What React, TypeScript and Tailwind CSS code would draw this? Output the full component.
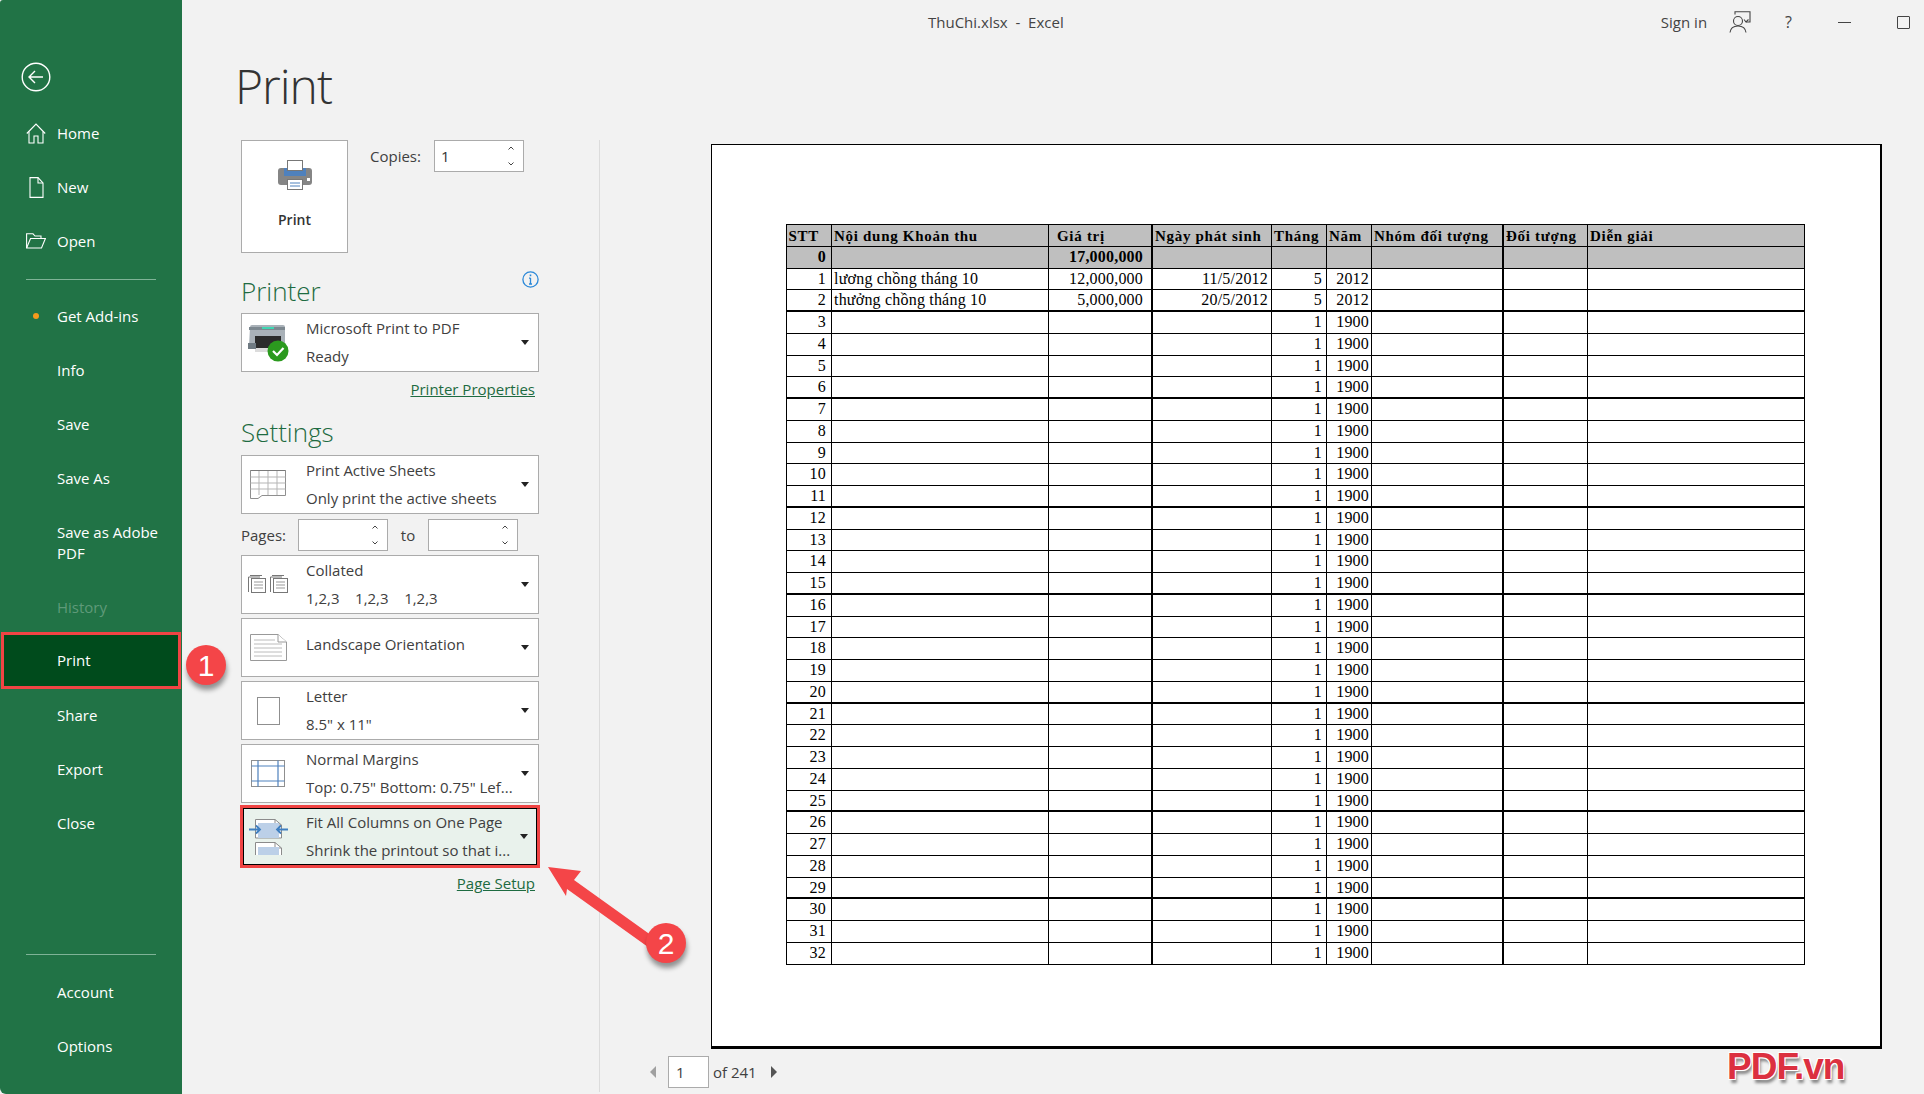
import type { ReactNode } from "react";

const uiFont = "font-['Open_Sans','Noto_Sans',sans-serif]";

const navTop = ["Home", "New", "Open"];
const navMid = ["Info", "Save", "Save As"];
const navLow = ["Share", "Export", "Close"];

const colWidths = [
  "w-[45.5px]",
  "w-[217px]",
  "w-[104px]",
  "w-[119px]",
  "w-[55px]",
  "w-[45px]",
  "w-[132px]",
  "w-[84px]",
  "w-[217.5px]",
];
const colBorders = [
  "border-r",
  "border-r",
  "border-r-2",
  "border-r",
  "border-r",
  "border-r",
  "border-r-2",
  "border-r",
  "",
];
const cellPad = ["pr-[5px]", "pl-[2px]", "pr-[8px]", "pr-[3px]", "pr-[4px]", "pr-[2px]", "", "", ""];
const thickBelow = [2, 6, 11, 15, 20, 25, 29];

type Row = string[];

const headerRow: Row = ["STT", "Nội dung Khoản thu", "Giá trị", "Ngày phát sinh", "Tháng", "Năm", "Nhóm đối tượng", "Đối tượng", "Diễn giải"];
const totalRow: Row = ["0", "", "17,000,000", "", "", "", "", "", ""];
const dataRows: Row[] = [
  ["1", "lương chồng tháng 10", "12,000,000", "11/5/2012", "5", "2012", "", "", ""],
  ["2", "thưởng chồng tháng 10", "5,000,000", "20/5/2012", "5", "2012", "", "", ""],
];
for (let i = 3; i <= 32; i++) {
  dataRows.push([String(i), "", "", "", "1", "1900", "", "", ""]);
}

function HomeIcon() {
  return (
    <svg width="20" height="21" viewBox="0 0 20 21" fill="none" stroke="white" strokeWidth="1.1">
      <path d="M0.8 10.5 L10 1 L19.2 10.5" />
      <path d="M3 8.5 V20 H8 V13 H12 V20 H17 V8.5" />
    </svg>
  );
}

function NewIcon() {
  return (
    <svg width="15" height="21" viewBox="0 0 15 21" fill="none" stroke="white" strokeWidth="1.1">
      <path d="M1 .6 H9 L14 6 V20.4 H1 Z" />
      <path d="M9 .6 V6 H14" />
    </svg>
  );
}

function OpenIcon() {
  return (
    <svg width="20" height="16" viewBox="0 0 20 16" fill="none" stroke="white" strokeWidth="1.1">
      <path d="M.6 15 V.8 H7 L9 3 H15 V5.5" />
      <path d="M.6 15 L4.5 5.5 H19.4 L15.5 15 Z" />
    </svg>
  );
}

function NavItem({ label, icon, disabled }: { label: string; icon?: ReactNode; disabled?: boolean }) {
  return (
    <div className={`relative flex h-[54px] items-center pl-[57px] text-[15px] ${disabled ? "text-[#5f9a79]" : "text-white"}`}>
      {icon && <span className="absolute left-[26px] flex w-[20px] justify-center">{icon}</span>}
      {label}
    </div>
  );
}

function Sidebar() {
  return (
    <aside className="relative flex h-full w-[182px] shrink-0 flex-col rounded-bl-[6px] rounded-tl-[3px] bg-[#217346]">
      <div className="flex h-[106px] items-start pl-[21px] pt-[62px]">
        <svg width="30" height="30" viewBox="0 0 30 30" fill="none" stroke="white" strokeWidth="1.4">
          <circle cx="15" cy="15" r="13.8" />
          <path d="M22 15 H8.5 M14 9 L8 15 L14 21" />
        </svg>
      </div>
      <NavItem label={navTop[0]} icon={<HomeIcon />} />
      <NavItem label={navTop[1]} icon={<NewIcon />} />
      <NavItem label={navTop[2]} icon={<OpenIcon />} />
      <div className="mx-[26px] mb-[9px] mt-[11px] h-px bg-[#7fb397]" />
      <NavItem label="Get Add-ins" icon={<span className="block h-[6px] w-[6px] rounded-full bg-[#f59a1c]" />} />
      {navMid.map((n) => (
        <NavItem key={n} label={n} />
      ))}
      <div className="h-[75px] pl-[57px] pt-[16.5px] text-[15px] leading-[21px] text-white">
        <div>Save as Adobe</div>
        <div>PDF</div>
      </div>
      <NavItem label="History" disabled />
      <div className="mx-[1px] -mt-[2px] flex h-[57px] items-center border-[3px] border-[#f04444] bg-[#004b1c] pl-[53px] text-[15px] text-white">Print</div>
      <div className="-mt-px">
        {navLow.map((n) => (
          <NavItem key={n} label={n} />
        ))}
      </div>
      <div className="mt-auto">
        <div className="mx-[26px] mb-[10px] h-px bg-[#7fb397]" />
        <NavItem label="Account" />
        <NavItem label="Options" />
        <div className="h-[21px]" />
      </div>
    </aside>
  );
}

function Caret() {
  return <span className="h-0 w-0 border-x-[4.5px] border-t-[5px] border-x-transparent border-t-[#222]" />;
}

function Spinner({ className, value }: { className: string; value?: string }) {
  return (
    <div className={`flex h-[32px] items-center justify-between border border-[#ababab] bg-white pl-[6px] pr-[8px] text-[15px] text-[#333] ${className}`}>
      <span>{value}</span>
      <svg width="8" height="22" viewBox="0 0 8 22" fill="none" stroke="#444" strokeWidth="1">
        <path d="M1.5 4.5 L4 2 L6.5 4.5 M1.5 17.5 L4 20 L6.5 17.5" />
      </svg>
    </div>
  );
}

function Dropdown({ icon, line1, line2, active }: { icon: ReactNode; line1: string; line2?: string; active?: boolean }) {
  return (
    <div
      className={`flex items-center ${
        active
          ? "-mx-px -my-[2px] h-[63px] w-[300px] border-[3px] border-[#f04444] bg-[#e9f2ec] shadow-[inset_0_0_0_1px_#000]"
          : "h-[59px] w-[298px] border border-[#ababab] bg-white"
      }`}
    >
      <span className="flex w-[52px] shrink-0 justify-center">{icon}</span>
      <div className={`${active ? "ml-[11px]" : "ml-[12px]"} flex-1 self-start text-[15px] leading-[28px] text-[#404040] ${line2 ? "" : "pt-[11px]"}`}>
        <div>{line1}</div>
        {line2 && <div className="whitespace-pre">{line2}</div>}
      </div>
      <span className="mr-[9px] flex">
        <Caret />
      </span>
    </div>
  );
}

function PrintIcon() {
  return (
    <svg width="34" height="30" viewBox="0 0 34 30">
      <rect x="0" y="8" width="34" height="17" rx="3" fill="#858585" />
      <rect x="6" y="8" width="22" height="8" fill="#4f81bd" />
      <rect x="9.5" y=".5" width="15" height="10" fill="white" stroke="#777" />
      <rect x="9.5" y="19.5" width="15" height="10" fill="white" stroke="#777" />
      <path d="M12 23 H22 M12 26 H22" stroke="#4f81bd" />
      <rect x="29" y="18" width="3" height="3" fill="white" />
    </svg>
  );
}

function PrinterReadyIcon() {
  return (
    <svg width="41" height="38" viewBox="0 0 41 38">
      <path d="M2 3 Q2 1 4 1 H35 Q37 1 37 3 V22 H1 Z" fill="#a9b1b8" />
      <rect x="1" y="3" width="36" height="3" fill="#7d8890" />
      <rect x="14" y="3" width="12" height="2" fill="#3fd6b2" />
      <rect x="7" y="12" width="26" height="14" fill="#2b2b2b" />
      <rect x="7" y="24" width="25" height="4" fill="#dcdcdc" />
      <rect x="0" y="19" width="8" height="6" fill="#6f7a82" />
      <circle cx="30" cy="27" r="10.5" fill="#2b9a1e" />
      <path d="M25 27 L29 31 L35.5 24" stroke="white" strokeWidth="2.2" fill="none" />
    </svg>
  );
}

function SheetsIcon() {
  return (
    <svg width="36" height="29" viewBox="0 0 36 29" fill="none" stroke="#8f8f8f">
      <path d="M.5 .5 H35.5 V25.5 H12 L8 28.5 H.5 Z" fill="white" />
      <path d="M.5 7 H35.5 M.5 13 H35.5 M.5 19 H35.5 M9 .5 V25 M18 .5 V25 M27 .5 V25" stroke="#b5b5b5" />
      <path d="M.5 .5 H35.5" stroke="#7a7a7a" />
    </svg>
  );
}

function StackedPage({ x }: { x: number }) {
  return (
    <g transform={`translate(${x} 0)`} fill="none" stroke="#777">
      <path d="M.5 2 H12 M.5 2 V17" />
      <path d="M2 .5 H14" />
      <rect x="3.5" y="3.5" width="14" height="14" fill="white" />
      <path d="M6 7 H15 M6 10 H15 M6 13 H15" stroke="#999" />
    </g>
  );
}

function CollatedIcon() {
  return (
    <svg width="41" height="19" viewBox="0 0 41 19">
      <StackedPage x={0} />
      <StackedPage x={22} />
    </svg>
  );
}

function LandscapeIcon() {
  return (
    <svg width="37" height="27" viewBox="0 0 37 27" fill="white" stroke="#999">
      <path d="M.5 .5 H28 L36.5 8 V26.5 H.5 Z" />
      <path d="M28 .5 V8 H36.5" />
      <path d="M4 6 H25 M4 10 H32 M4 14 H32 M4 18 H32 M4 22 H32" fill="none" stroke="#bcbcbc" />
    </svg>
  );
}

function LetterIcon() {
  return <span className="block h-[28px] w-[23px] border border-[#8f8f8f] bg-white" />;
}

function MarginsIcon() {
  return (
    <svg width="34" height="27" viewBox="0 0 34 27" fill="white" stroke="#8f8f8f">
      <rect x=".5" y=".5" width="33" height="26" />
      <path d="M7 .5 V26.5 M27 .5 V26.5 M.5 6 H33.5 M.5 21 H33.5" fill="none" stroke="#4f81bd" strokeWidth="1.2" />
    </svg>
  );
}

function FitIcon() {
  return (
    <svg width="40" height="36" viewBox="0 0 40 36" fill="none">
      <path d="M6.5 .5 H26 L32.5 6 V19 H6.5 Z" fill="white" stroke="#8b8b8b" />
      <path d="M26 .5 V6 H32.5" stroke="#8b8b8b" />
      <rect x="9" y="4" width="21" height="15" fill="#bcd0e8" />
      <path d="M6.5 36 V23.5 H26 L32.5 29 V36" fill="white" stroke="#8b8b8b" />
      <path d="M26 23.5 V29 H32.5" stroke="#8b8b8b" />
      <rect x="9" y="28" width="21" height="8" fill="#bcd0e8" />
      <path d="M0 10.5 H11 M7 6.5 L11 10.5 L7 14.5 M39 10.5 H28 M32 6.5 L28 10.5 L32 14.5" stroke="#3f7fc0" strokeWidth="1.8" />
    </svg>
  );
}

function LeftPanel() {
  return (
    <div className="relative w-[418px] shrink-0 pl-[59px]">
      <div className="-ml-[6px] h-[94px] pt-[6px] text-[48px] font-light leading-[68px] tracking-[-1px] text-[#333]">Print</div>
      <div className="flex">
        <div className="flex h-[113px] w-[107px] flex-col items-center border border-[#ababab] bg-white pt-[19px]">
          <PrintIcon />
          <span className="mt-[20px] text-[14px] font-semibold leading-[20px] text-[#333]">Print</span>
        </div>
        <div className="ml-[22px] flex h-[32px] items-center text-[15px] text-[#404040]">Copies:</div>
        <Spinner className="ml-[13px] w-[90px]" value="1" />
      </div>
      <div className="relative flex h-[60px] w-[298px] items-end pb-[4px] text-[26px] font-light leading-[36px] text-[#1e6b41]">
        Printer
        <svg className="absolute right-0 top-[18px]" width="17" height="17" viewBox="0 0 17 17" fill="none" stroke="#2b88d8" strokeWidth="1.3">
          <circle cx="8.5" cy="8.5" r="7.6" />
          <path d="M8.5 7 V13 M7 7.2 H8.5 M7 13 H10" />
          <path d="M8.5 3.5 V5.2" strokeWidth="1.6" />
        </svg>
      </div>
      <Dropdown icon={<PrinterReadyIcon />} line1="Microsoft Print to PDF" line2="Ready" />
      <div className="flex h-[34px] w-[294px] items-center justify-end text-[15px] text-[#1e6b41] underline">Printer Properties</div>
      <div className="flex h-[49px] items-center pt-[2px] text-[26px] font-light leading-[36px] text-[#1e6b41]">Settings</div>
      <div className="flex w-[298px] flex-col gap-[4px]">
        <Dropdown icon={<SheetsIcon />} line1="Print Active Sheets" line2="Only print the active sheets" />
        <div className="mt-px flex items-center text-[15px] text-[#404040]">
          <span className="w-[57px]">Pages:</span>
          <Spinner className="w-[90px]" />
          <span className="w-[40px] text-center">to</span>
          <Spinner className="w-[90px]" />
        </div>
        <Dropdown icon={<CollatedIcon />} line1="Collated" line2={"1,2,3    1,2,3    1,2,3"} />
        <Dropdown icon={<LandscapeIcon />} line1="Landscape Orientation" />
        <Dropdown icon={<LetterIcon />} line1="Letter" line2={'8.5" x 11"'} />
        <Dropdown icon={<MarginsIcon />} line1="Normal Margins" line2={'Top: 0.75" Bottom: 0.75" Lef...'} />
        <Dropdown active icon={<FitIcon />} line1="Fit All Columns on One Page" line2="Shrink the printout so that i..." />
      </div>
      <div className="flex h-[34px] w-[294px] items-center justify-end text-[15px] text-[#1e6b41] underline">Page Setup</div>
      <div className="absolute bottom-[2px] right-0 top-[94px] w-px bg-[#dcdcdc]" />
    </div>
  );
}

function SheetRow({ row, index, bold, shaded }: { row: Row; index: number; bold?: boolean; shaded?: boolean }) {
  const thick = thickBelow.includes(index);
  const isHeader = index === -1;
  return (
    <div className={`flex h-[21.76px] ${thick ? "border-b-2" : "border-b"} border-black ${shaded ? "bg-[#bfbfbf]" : "bg-white"}`}>
      {row.map((cell, i) => (
        <div
          key={i}
          className={`${colWidths[i]} ${colBorders[i]} shrink-0 overflow-hidden whitespace-nowrap border-black ${
            isHeader
              ? "pl-[2px] text-[15px] font-bold leading-[22px] tracking-[0.7px]"
              : `${i === 1 ? "" : "text-right"} ${cellPad[i]} text-[16px] leading-[20px] tracking-[0.2px] ${bold ? "font-bold" : ""}`
          }`}
        >
          {isHeader && i === 2 ? <span className="pl-[6px]">{cell}</span> : cell}
        </div>
      ))}
    </div>
  );
}

function Preview() {
  return (
    <div className="flex flex-1 flex-col pl-[111px]">
      <div className="h-[98px] shrink-0" />
      <div className="h-[905px] w-[1171px] border-b-[3px] border-l border-r-2 border-t border-black bg-white pl-[73.5px] pt-[79px] font-['Liberation_Serif',serif] text-black">
        <div className="w-[1019px] border-l border-r border-t border-black">
          <SheetRow row={headerRow} index={-1} shaded />
          <SheetRow row={totalRow} index={0} bold shaded />
          {dataRows.map((r, i) => (
            <SheetRow key={i} row={r} index={i + 1} />
          ))}
        </div>
      </div>
      <div className="relative flex h-[45px] items-center text-[15px] text-[#404040]">
        <div className="-ml-[61px] mt-[1px] flex items-center">
          <span className="h-0 w-0 border-y-[6px] border-r-[6px] border-y-transparent border-r-[#a0a0a0]" />
          <span className="ml-[12px] flex h-[32px] w-[41px] items-center border border-[#ababab] bg-white pl-[7px]">1</span>
          <span className="ml-[4px]">of 241</span>
          <span className="ml-[14px] h-0 w-0 border-y-[6px] border-l-[6px] border-y-transparent border-l-[#555]" />
        </div>
        <span className="absolute left-[1016px] top-[-10px] font-['Liberation_Sans',sans-serif] text-[37px] font-bold tracking-[-1px] text-[#dc3040] [text-shadow:1px_1px_0_#fff,-1px_-1px_0_#fff,1px_-1px_0_#fff,-1px_1px_0_#fff,2px_4px_3px_#888]">
          PDF.vn
        </span>
      </div>
    </div>
  );
}

function TitleBar() {
  return (
    <div className="relative flex h-[46px] shrink-0 items-center pb-[2px] text-[15px] text-[#444]">
      <span className="absolute left-[746px] top-[11px] whitespace-pre">ThuChi.xlsx  -  Excel</span>
      <div className="ml-auto flex items-center pr-[14px]">
        <span>Sign in</span>
        <svg className="ml-[22px]" width="22" height="22" viewBox="0 0 22 22" fill="none" stroke="#444" strokeWidth="1.1">
          <path d="M6 3.5 V.8 H21 V11 H17" />
          <circle cx="9" cy="10" r="4.5" />
          <path d="M1 21.5 C1.5 17 5 15 9 15 C13 15 16.5 17 17 21.5" />
          <path d="M15 8.5 L17 11 L19.5 8.5" />
        </svg>
        <span className="ml-[34px] text-[16px]">?</span>
        <span className="ml-[46px] block h-px w-[13px] bg-[#444]" />
        <span className="ml-[46px] block h-[13px] w-[13px] rounded-[1px] border border-[#444]" />
      </div>
    </div>
  );
}

function Annotations() {
  return (
    <div className="pointer-events-none absolute inset-0">
      <svg className="absolute left-[540px] top-[860px]" width="140" height="100" viewBox="0 0 140 100">
        <path d="M8 7 L41 11 L34 20 L115 78 L108 87 L27 29 L26 36 Z" fill="#f44548" />
      </svg>
      <div className="absolute left-[186px] top-[645px] flex h-[40px] w-[40px] items-center justify-center rounded-full bg-[#f44548] font-['Liberation_Sans',sans-serif] text-[30px] text-white shadow-[1px_5px_5px_rgba(0,0,0,0.4)]">
        1
      </div>
      <div className="absolute left-[646px] top-[923px] flex h-[40px] w-[40px] items-center justify-center rounded-full bg-[#f44548] font-['Liberation_Sans',sans-serif] text-[30px] text-white shadow-[1px_5px_5px_rgba(0,0,0,0.4)]">
        2
      </div>
    </div>
  );
}

export default function App() {
  return (
    <div className={`relative flex h-[1094px] w-[1924px] overflow-hidden bg-[#f2f2f2] ${uiFont}`}>
      <Sidebar />
      <div className="flex min-w-0 flex-1 flex-col">
        <TitleBar />
        <div className="flex flex-1">
          <LeftPanel />
          <Preview />
        </div>
      </div>
      <Annotations />
    </div>
  );
}
